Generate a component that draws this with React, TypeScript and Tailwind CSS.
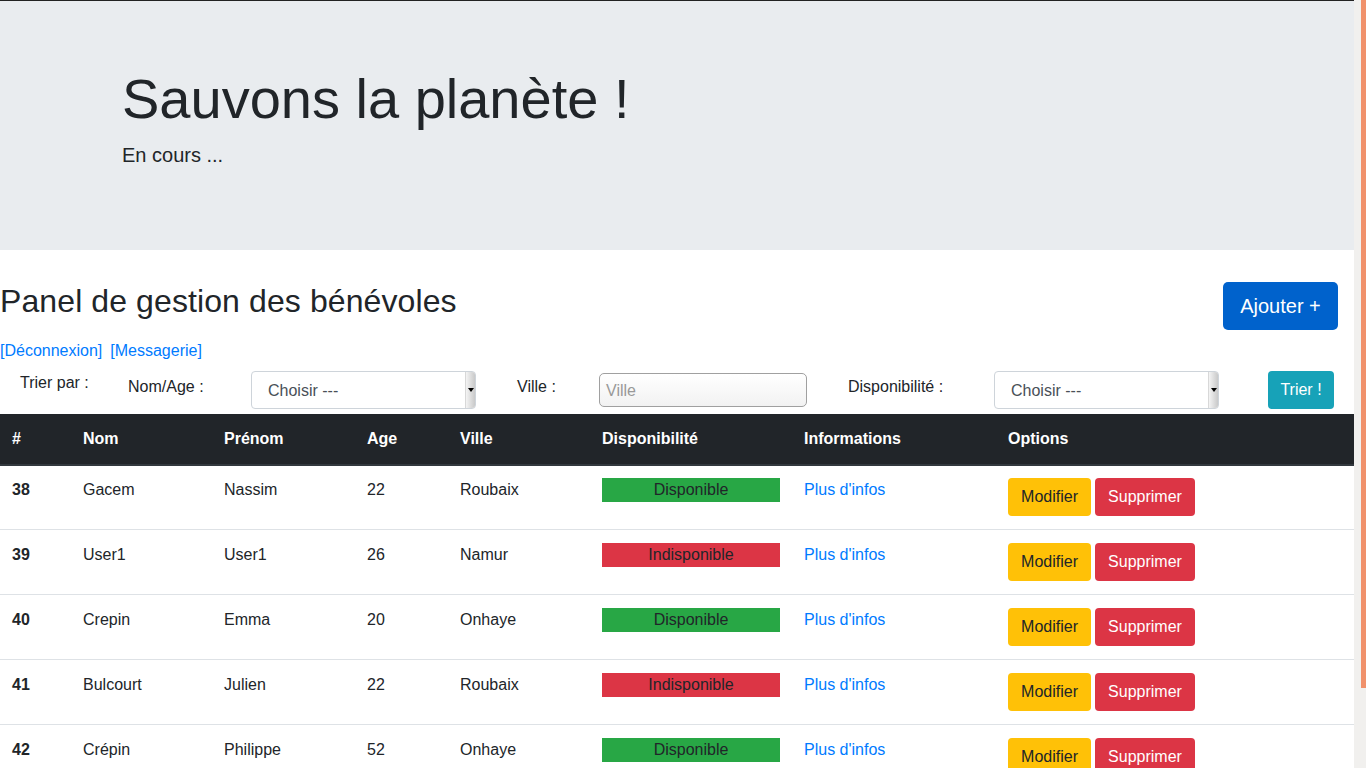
const rows = [
  { id: 38, nom: "Gacem", prenom: "Nassim", age: 22, ville: "Roubaix", dispo: true },
  { id: 39, nom: "User1", prenom: "User1", age: 26, ville: "Namur", dispo: false },
  { id: 40, nom: "Crepin", prenom: "Emma", age: 20, ville: "Onhaye", dispo: true },
  { id: 41, nom: "Bulcourt", prenom: "Julien", age: 22, ville: "Roubaix", dispo: false },
  { id: 42, nom: "Crépin", prenom: "Philippe", age: 52, ville: "Onhaye", dispo: true },
];

function FakeSelect() {
  return (
    <div className="flex h-[38px] w-[225px] rounded-[4px] border border-[#ced4da] bg-white overflow-hidden">
      <div className="flex-1 pl-[16px] leading-[37px] text-[#495057]">Choisir ---</div>
      {/* native-looking arrow strip */}
      <div className="flex w-[10px] items-center justify-center bg-gradient-to-r from-[#f4f4f4] to-[#c9c9c9] border-l border-[#d8d8d8]">
        <div className="h-0 w-0 border-x-[3px] border-t-[4px] border-x-transparent border-t-black" />
      </div>
    </div>
  );
}

export default function App() {
  return (
    <div className="flex h-[768px] w-full overflow-hidden bg-white font-['Liberation_Sans',Arial,sans-serif] text-[16px] text-[#212529]">
      <div className="flex-1 overflow-hidden">
        <div className="h-px bg-[#222]" />
        {/* Jumbotron */}
        <div className="bg-[#e9ecef] pt-[64px] pb-[64px]">
          <div className="pl-[122px]">
            <h1 className="mb-[8px] text-[56px] font-normal leading-[67px]">Sauvons la planète !</h1>
            <p className="mb-[16px] text-[20px] leading-[30px]">En cours ...</p>
          </div>
        </div>

        {/* Header */}
        <div className="mt-[32px] flex items-start justify-between pr-[16px]">
          <h2 className="text-[32px] font-normal leading-[38px] tracking-[0.1px]">Panel de gestion des bénévoles</h2>
          <button className="h-[48px] w-[115px] rounded-[5px] bg-[#0062cc] text-[20px] text-white">Ajouter +</button>
        </div>
        <div className="mt-[9px] flex gap-[8px] leading-[24px] text-[#007bff]">
          <span>[Déconnexion]</span>
          <span>[Messagerie]</span>
        </div>

        {/* Filters */}
        <div className="mt-[8px] flex h-[38px] items-start">
          <span className="ml-[20px] w-[108px] leading-[24px]">Trier par :</span>
          <span className="w-[123px] pt-[4px] leading-[24px]">Nom/Age :</span>
          <FakeSelect />
          <span className="ml-[41px] w-[82px] pt-[4px] leading-[24px]">Ville :</span>
          <div className="mt-[2px] h-[34px] w-[208px] rounded-[5px] border border-[#a0a0a0] bg-gradient-to-b from-white to-[#f2f2f2] pl-[6px] leading-[33px] text-[#999]">
            Ville
          </div>
          <span className="ml-[41px] w-[146px] pt-[4px] leading-[24px]">Disponibilité :</span>
          <FakeSelect />
          <button className="ml-[49px] h-[38px] w-[66px] rounded-[4px] bg-[#17a2b8] text-white">Trier !</button>
        </div>

        {/* Table */}
        <table className="mt-[5px] w-full border-collapse text-left">
          <thead>
            <tr className="bg-[#212529] text-white">
              <th className="h-[51px] w-[71px] border-b-2 border-[#32383e] px-[12px] font-bold">#</th>
              <th className="w-[141px] border-b-2 border-[#32383e] px-[12px] font-bold">Nom</th>
              <th className="w-[143px] border-b-2 border-[#32383e] px-[12px] font-bold">Prénom</th>
              <th className="w-[93px] border-b-2 border-[#32383e] px-[12px] font-bold">Age</th>
              <th className="w-[142px] border-b-2 border-[#32383e] px-[12px] font-bold">Ville</th>
              <th className="w-[202px] border-b-2 border-[#32383e] px-[12px] font-bold">Disponibilité</th>
              <th className="w-[204px] border-b-2 border-[#32383e] px-[12px] font-bold">Informations</th>
              <th className="border-b-2 border-[#32383e] px-[12px] font-bold">Options</th>
            </tr>
          </thead>
          <tbody>
            {rows.map((r, i) => {
              const pad = i === 0 ? "pt-[12px]" : "pt-[13px]";
              return (
                <tr key={r.id} className={i === 0 ? "" : "border-t border-[#dee2e6]"}>
                  <th className={`${i === 0 ? "h-[64px]" : "h-[65px]"} ${pad} px-[12px] align-top font-bold leading-[24px]`}>{r.id}</th>
                  <td className={`${pad} px-[12px] align-top leading-[24px]`}>{r.nom}</td>
                  <td className={`${pad} px-[12px] align-top leading-[24px]`}>{r.prenom}</td>
                  <td className={`${pad} px-[12px] align-top leading-[24px]`}>{r.age}</td>
                  <td className={`${pad} px-[12px] align-top leading-[24px]`}>{r.ville}</td>
                  <td className={`${pad} px-[12px] align-top leading-[24px]`}>
                    <div className={`${r.dispo ? "bg-[#28a745]" : "bg-[#dc3545]"} h-[24px] text-center`}>
                      {r.dispo ? "Disponible" : "Indisponible"}
                    </div>
                  </td>
                  <td className={`${pad} px-[12px] align-top leading-[24px] text-[#007bff]`}>Plus d'infos</td>
                  <td className={`${pad} px-[12px] align-top`}>
                    <div className="flex gap-[4px]">
                      <button className="h-[38px] w-[83px] rounded-[4px] bg-[#ffc107] text-[#212529]">Modifier</button>
                      <button className="h-[38px] w-[100px] rounded-[4px] bg-[#dc3545] text-white">Supprimer</button>
                    </div>
                  </td>
                </tr>
              );
            })}
          </tbody>
        </table>
      </div>

      {/* Scrollbar */}
      <div className="flex w-[12px] bg-[#f1f0ee]">
        <div className="ml-[7px] h-[688px] w-[5px] bg-[#f0916b]" />
      </div>
    </div>
  );
}
